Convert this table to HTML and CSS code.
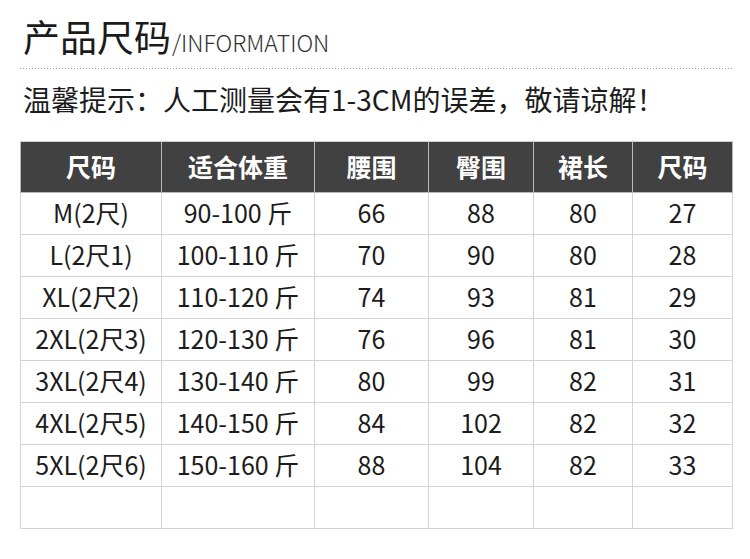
FILE: index.html
```html
<!DOCTYPE html>
<html lang="zh-CN">
<head>
<meta charset="utf-8">
<title>产品尺码</title>
<link rel="stylesheet" href="styles.css">
</head>
<body>
<div class="page">
  <h1 class="title"><span class="title-cn">产品尺码</span><span class="title-en">/INFORMATION</span></h1>
  <div class="dots"></div>
  <p class="tip">温馨提示：人工测量会有1-3CM的误差，敬请谅解！</p>
  <table class="sizes">
    <colgroup>
      <col class="c1"><col class="c2"><col class="c3"><col class="c4"><col class="c5"><col class="c6">
    </colgroup>
    <thead>
      <tr><th>尺码</th><th>适合体重</th><th>腰围</th><th>臀围</th><th>裙长</th><th>尺码</th></tr>
    </thead>
    <tbody>
      <tr><td>M(2尺)</td><td>90-100 斤</td><td>66</td><td>88</td><td>80</td><td>27</td></tr>
      <tr><td>L(2尺1)</td><td>100-110 斤</td><td>70</td><td>90</td><td>80</td><td>28</td></tr>
      <tr><td>XL(2尺2)</td><td>110-120 斤</td><td>74</td><td>93</td><td>81</td><td>29</td></tr>
      <tr><td>2XL(2尺3)</td><td>120-130 斤</td><td>76</td><td>96</td><td>81</td><td>30</td></tr>
      <tr><td>3XL(2尺4)</td><td>130-140 斤</td><td>80</td><td>99</td><td>82</td><td>31</td></tr>
      <tr><td>4XL(2尺5)</td><td>140-150 斤</td><td>84</td><td>102</td><td>82</td><td>32</td></tr>
      <tr><td>5XL(2尺6)</td><td>150-160 斤</td><td>88</td><td>104</td><td>82</td><td>33</td></tr>
      <tr><td></td><td></td><td></td><td></td><td></td><td></td></tr>
    </tbody>
  </table>
</div>
</body>
</html>
```
FILE: styles.css
```css
html, body {
  margin: 0;
  padding: 0;
  background: #ffffff;
}
body {
  font-family: "Noto Sans CJK SC", "Noto Sans", sans-serif;
  color: #1c1c1c;
}
.page {
  width: 713px;
  padding: 0 17px 0 20px;
}
.title {
  margin: 0;
  padding: 14px 0 0 3px;
  height: 49px;
  box-sizing: border-box;
  font-weight: 400;
  line-height: 44px;
  white-space: nowrap;
}
.title-cn {
  font-size: 37px;
  color: #1a1a1a;
}
.title-en {
  font-size: 23px;
  font-weight: 300;
  color: #333;
  margin-left: 1px;
}
.dots {
  height: 1px;
  margin-top: 19px;
  background: repeating-linear-gradient(to right, #9a9a9a 0 1px, transparent 1px 3px);
}
.tip {
  margin: 12px 0 0 3px;
  font-size: 28px;
  line-height: 36px;
  color: #1c1c1c;
  white-space: nowrap;
}
.sizes {
  margin-top: 24px;
  width: 712px;
  table-layout: fixed;
  border-collapse: collapse;
  border: 1px solid #cfcfcf;
}
.c1 { width: 141px; }
.c2 { width: 153px; }
.c3 { width: 114px; }
.c4 { width: 105px; }
.c5 { width: 99px; }
.c6 { width: 100px; }
.sizes th {
  height: 47px;
  padding: 0 0 3px;
  background: #414141;
  color: #ffffff;
  font-size: 25px;
  font-weight: 700;
  border: 1px solid #b8b8b8;
  border-top-color: #cfcfcf;
}
.sizes td {
  height: 37px;
  padding: 0 0 4px;
  text-align: center;
  font-size: 25px;
  color: #1c1c1c;
  border: 1px solid #d4d4d4;
  white-space: nowrap;
}
```
